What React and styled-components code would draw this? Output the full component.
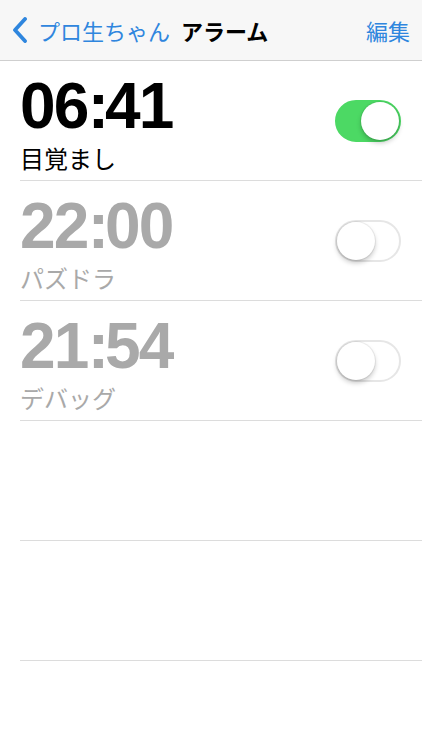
import React, { useState } from "react";
import styled, { createGlobalStyle } from "styled-components";

const GlobalStyle = createGlobalStyle`
  html, body {
    margin: 0;
    padding: 0;
    background: #ffffff;
  }
  body {
    font-family: "Liberation Sans", "Noto Sans CJK JP", sans-serif;
    -webkit-font-smoothing: antialiased;
  }
`;

const alarms = [
  { id: 1, hour: "06", minute: "41", label: "目覚まし", on: true },
  { id: 2, hour: "22", minute: "00", label: "パズドラ", on: false },
  { id: 3, hour: "21", minute: "54", label: "デバッグ", on: false },
];

const App = () => {
  const [list, setList] = useState(alarms);

  const toggle = (id) => {
    setList(list.map((a) => (a.id === id ? { ...a, on: !a.on } : a)));
  };

  return (
    <Screen>
      <GlobalStyle />
      <NavBar>
        <BackButton>
          <svg width="16" height="26" viewBox="0 0 16 26">
            <path d="M13 2 L3 13 L13 24" fill="none" stroke="#2f86de" strokeWidth="3.8" strokeLinecap="round" strokeLinejoin="round" />
          </svg>
          <span>プロ生ちゃん</span>
        </BackButton>
        <NavTitle>アラーム</NavTitle>
        <NavAction>編集</NavAction>
      </NavBar>
      <List>
        {list.map((alarm) => (
          <Row key={alarm.id}>
            <Info>
              <Time active={alarm.on}>
                {alarm.hour}
                <Colon>:</Colon>
                {alarm.minute}
              </Time>
              <Label active={alarm.on}>{alarm.label}</Label>
            </Info>
            <Switch on={alarm.on} onClick={() => toggle(alarm.id)}>
              <Knob on={alarm.on} />
            </Switch>
          </Row>
        ))}
        <Row />
        <Row />
      </List>
    </Screen>
  );
};

const Screen = styled.div`
  width: 422px;
  min-height: 750px;
  background: #ffffff;
`;

const NavBar = styled.div`
  height: 60px;
  display: flex;
  align-items: center;
  padding: 0 12px;
  background: #f7f7f7;
  border-bottom: 1px solid #cfcfcf;
  font-family: "Noto Sans CJK JP", sans-serif;
  font-size: 22px;
`;

const BackButton = styled.div`
  display: flex;
  align-items: center;
  gap: 10px;
  color: #2f86de;
  cursor: pointer;

  svg {
    display: block;
  }
`;

const NavTitle = styled.div`
  margin-left: 11px;
  color: #000000;
  font-weight: 700;
`;

const NavAction = styled.div`
  margin-left: auto;
  color: #2f86de;
  cursor: pointer;
`;

const List = styled.div`
  display: flex;
  flex-direction: column;
`;

const Row = styled.div`
  height: 119px;
  margin-left: 20px;
  padding-right: 21px;
  display: flex;
  align-items: center;
  justify-content: space-between;
  border-bottom: 1px solid #dcdcdc;
`;

const Info = styled.div`
  display: flex;
  flex-direction: column;
  gap: 6px;
  margin-top: 4px;
`;

const Time = styled.div`
  font-family: "Liberation Sans", sans-serif;
  font-weight: 700;
  font-size: 64px;
  line-height: 64px;
  letter-spacing: -1.75px;
  color: ${({ active }) => (active ? "#000000" : "#a9a9a9")};
`;

const Colon = styled.span`
  letter-spacing: -4px;
`;

const Label = styled.div`
  font-family: "Noto Sans CJK JP", sans-serif;
  font-size: 24px;
  line-height: 28px;
  color: ${({ active }) => (active ? "#000000" : "#a9a9a9")};
`;

const Switch = styled.div`
  position: relative;
  width: 66px;
  height: 42px;
  box-sizing: border-box;
  border-radius: 21px;
  background: ${({ on }) => (on ? "#4cd964" : "#ffffff")};
  border: 2px solid ${({ on }) => (on ? "#4cd964" : "#e6e6e6")};
  cursor: pointer;
`;

const Knob = styled.div`
  position: absolute;
  top: 0;
  left: ${({ on }) => (on ? "24px" : "0")};
  width: 38px;
  height: 38px;
  border-radius: 50%;
  background: #ffffff;
  box-shadow: 0 3px 5px rgba(0, 0, 0, 0.22), 0 0 0 1px rgba(0, 0, 0, 0.06);
`;

export default App;
